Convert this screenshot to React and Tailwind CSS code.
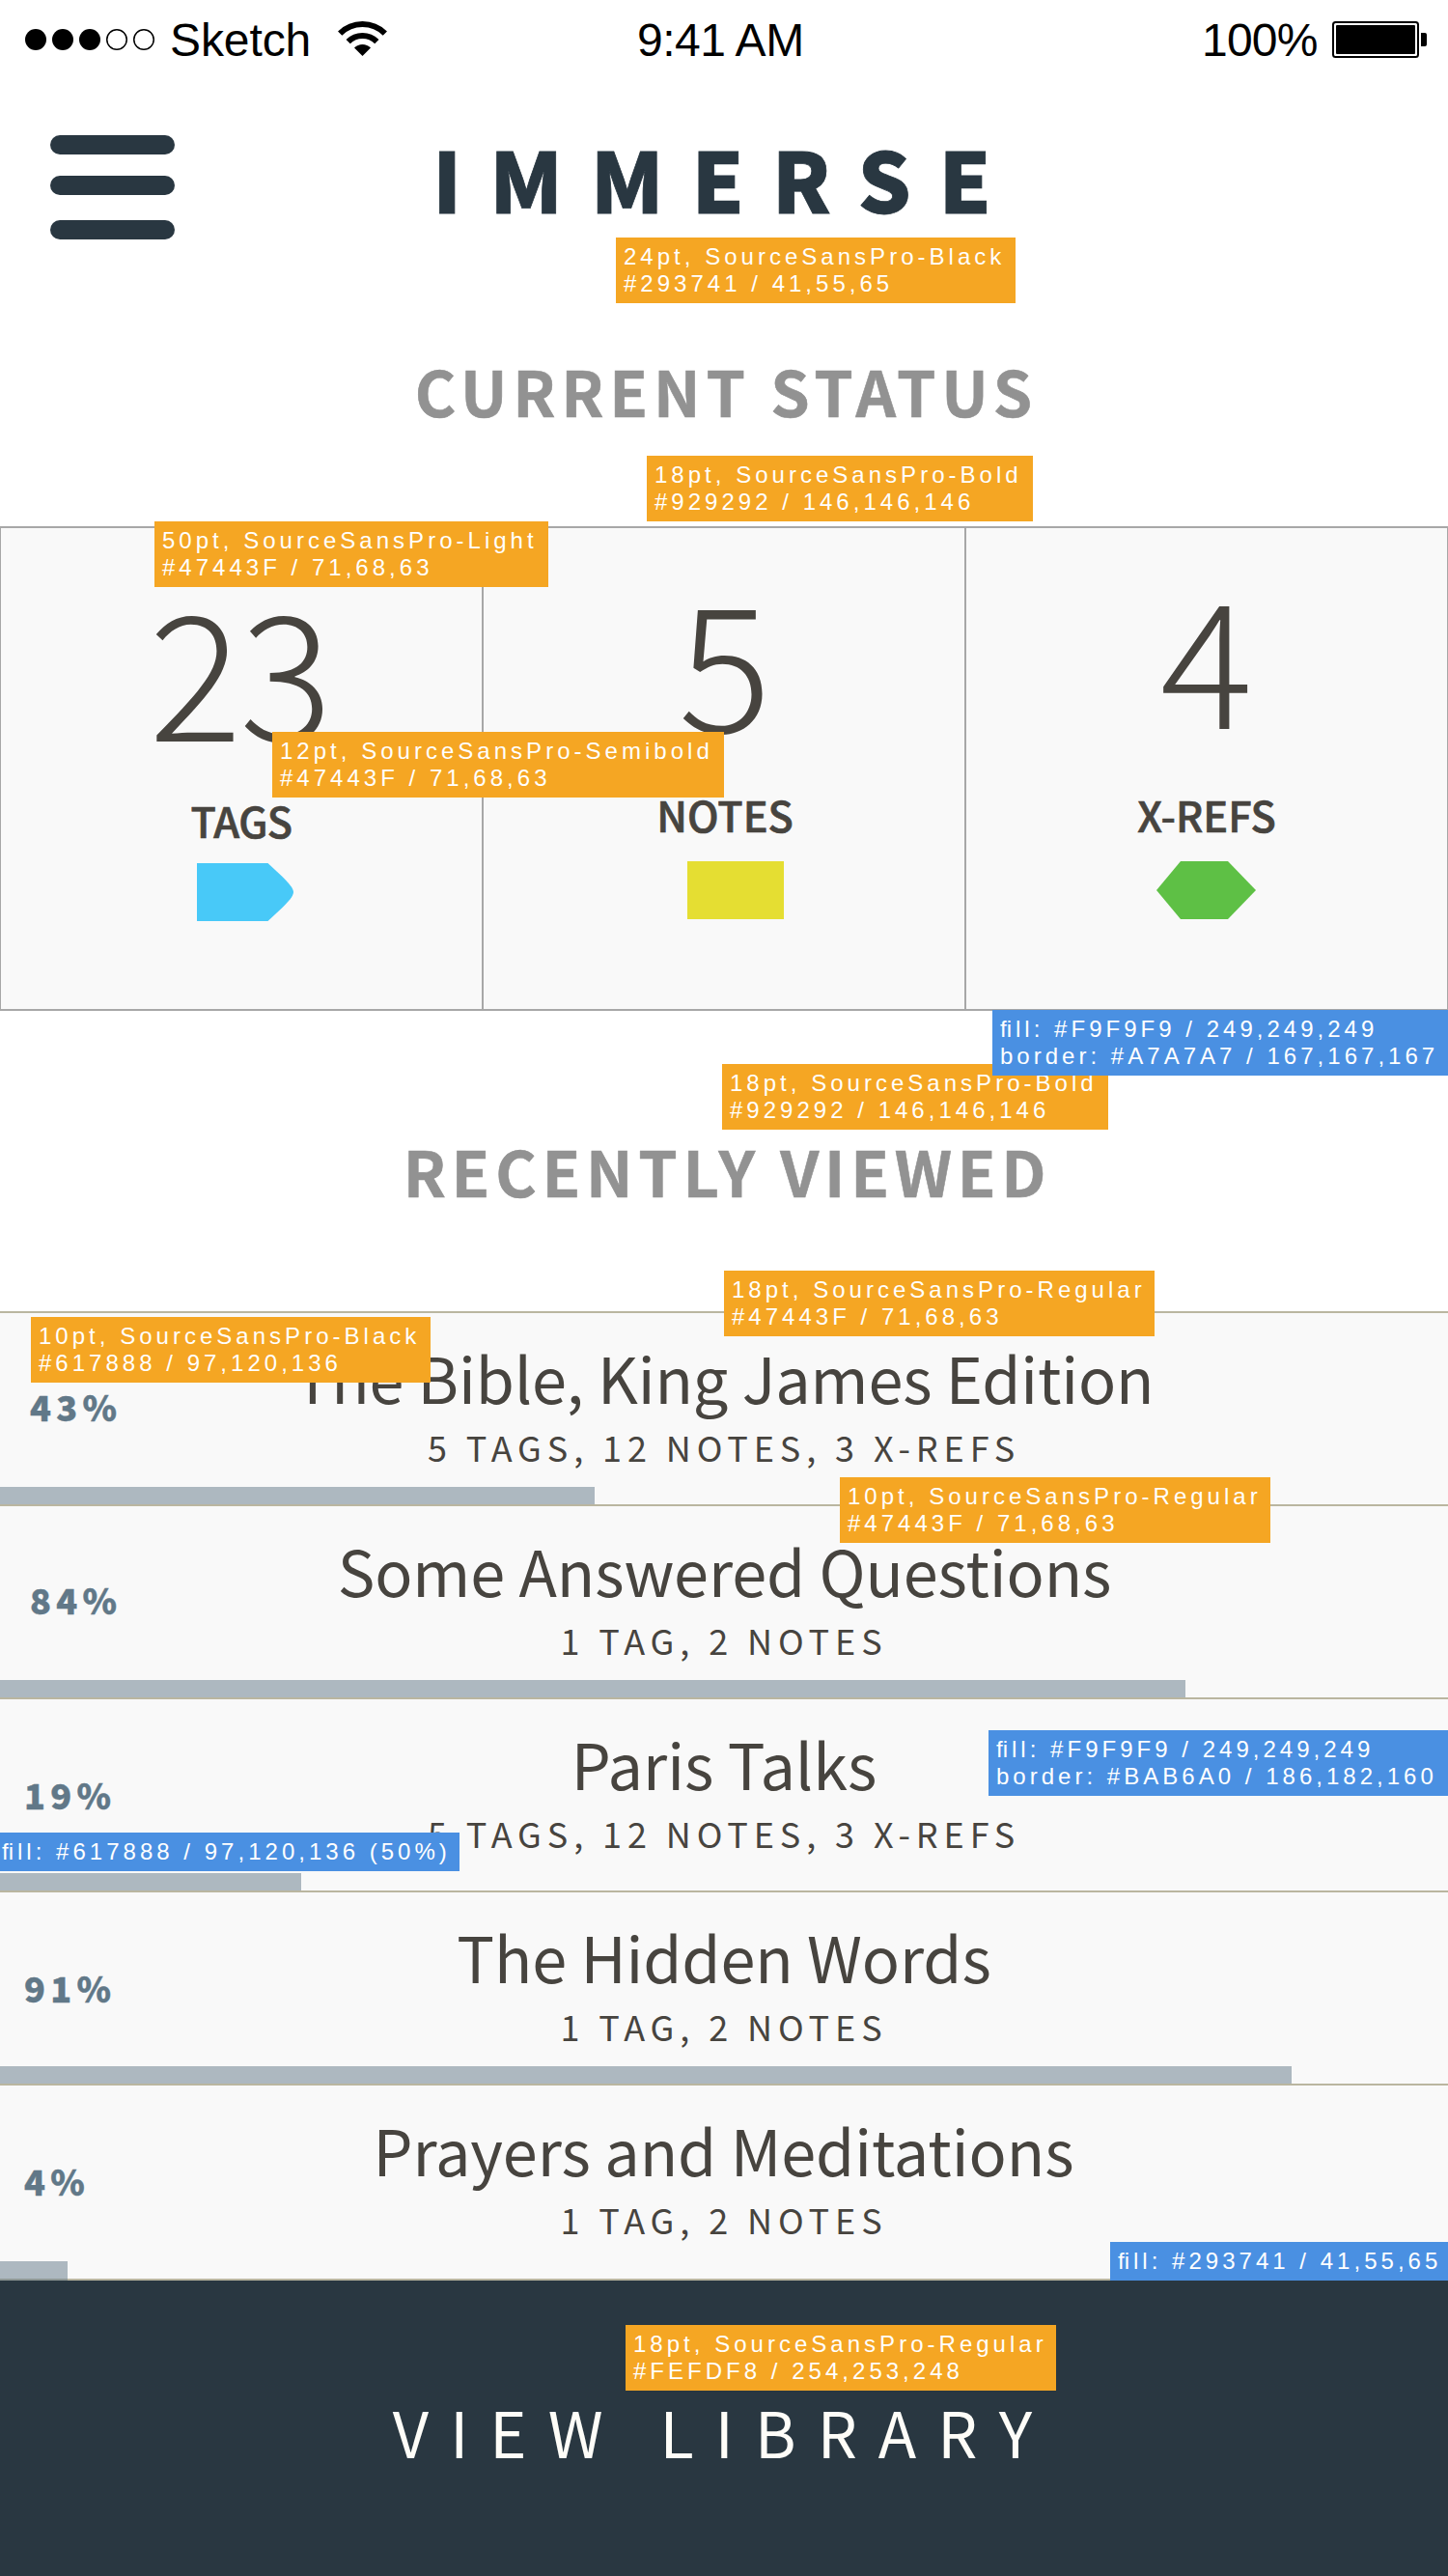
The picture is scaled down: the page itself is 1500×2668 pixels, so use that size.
import React from "react";
import clsx from "clsx";

const SOURCE = "font-['Noto_Sans_CJK_SC',sans-serif]";

/* ---------- status bar ---------- */

function SignalDots() {
  return (
    <svg width="135" height="22" viewBox="0 0 135 22" className="shrink-0">
      {[11, 39, 67].map((x) => (
        <circle key={x} cx={x} cy="11" r="11" fill="#000" />
      ))}
      {[95, 123].map((x) => (
        <circle key={x} cx={x} cy="11" r="10.25" fill="none" stroke="#000" strokeWidth="1.5" />
      ))}
    </svg>
  );
}

function Wifi() {
  return (
    <svg width="51" height="36" viewBox="0 0 51 36" className="-mt-0.5 ml-7 shrink-0">
      <g fill="none" stroke="#000" strokeWidth="6">
        <path d="M2.17 12.67A33 33 0 0 1 48.83 12.67" />
        <path d="M10.65 21.15A21 21 0 0 1 40.35 21.15" />
      </g>
      <path d="M25.5 36L17.01 27.51A12 12 0 0 1 33.99 27.51Z" fill="#000" />
    </svg>
  );
}

function Battery() {
  return (
    <svg width="98" height="38" viewBox="0 0 98 38" className="shrink-0">
      <rect x="1" y="1" width="88" height="36" rx="2.5" fill="none" stroke="#000" strokeWidth="2" />
      <rect x="4" y="4" width="82" height="30" rx="1" fill="#000" />
      <path d="M92 12h4a2 2 0 0 1 2 2v10a2 2 0 0 1-2 2h-4z" fill="#000" />
    </svg>
  );
}

function StatusBar() {
  return (
    <div className="flex h-[82px] items-center font-['Liberation_Sans',sans-serif] text-[48px] leading-[82px] text-black">
      <div className="flex w-[660px] shrink-0 items-center pl-[26px]">
        <SignalDots />
        <span className="ml-[15px] pt-px tracking-[-0.1px]">Sketch</span>
        <Wifi />
      </div>
      <span className="w-[585px] shrink-0 pt-px tracking-[-0.5px]">9:41 AM</span>
      <span className="w-[135px] shrink-0 pt-px tracking-[-0.76px]">100%</span>
      <Battery />
    </div>
  );
}

/* ---------- header ---------- */

function Header() {
  return (
    <header className="mt-[58px] flex h-[108px] pl-[52px]">
      <button className="flex w-[129px] flex-col" aria-label="Menu">
        <span className="h-5 rounded-[10px] bg-[#293741]" />
        <span className="mt-[22px] h-5 rounded-[10px] bg-[#293741]" />
        <span className="mt-[26px] h-5 rounded-[10px] bg-[#293741]" />
      </button>
      <h1 className="mt-px ml-[267px] text-[86.4px] leading-[85px] font-black tracking-[28.89px] text-[#293741] [-webkit-text-stroke:0.8px_#293741]">
        IMMERSE
      </h1>
    </header>
  );
}

/* ---------- stats ---------- */

function Stat({ value, label, icon, column, number, caption }) {
  return (
    <div className={clsx("flex flex-col items-center border-x border-[#a7a7a7]", column)}>
      <div className={clsx("text-[180px] leading-[180px] font-light", number)}>{value}</div>
      <div
        className={clsx(
          "text-[43.2px] leading-[60px] font-medium [-webkit-text-stroke:0.7px_#47443f]",
          caption
        )}
      >
        {label}
      </div>
      {icon}
    </div>
  );
}

function Stats() {
  return (
    <section className="mt-[91px] grid h-[502px] grid-cols-3 border-y-2 border-[#a7a7a7] bg-[#f9f9f9] text-[#47443f]">
      <Stat
        value="23"
        label="TAGS"
        column="pt-[53px]"
        number="pr-1 tracking-[-2.5px]"
        caption="mt-[39px] tracking-[-0.6px]"
        icon={
          <svg width="100" height="60" viewBox="0 0 100 60" className="mt-[15px] ml-2">
            <path d="M0 0H73.5L88 13.5C95 20.500 100 26 100 30C100 34 95 39.500 88 46.500L73.500 60H0Z" fill="#48c9f8" />
          </svg>
        }
      />
      <Stat
        value="5"
        label="NOTES"
        column="pt-[44px]"
        number="pl-0.5"
        caption="mt-[42px] pl-[2px]"
        icon={<div className="mt-[19px] ml-6 h-[60px] w-[100px] bg-[#e5de32]" />}
      />
      <Stat
        value="4"
        label="X-REFS"
        column="pt-10"
        number=""
        caption="mt-[46px]"
        icon={
          <svg width="103" height="60" viewBox="0 0 103 60" className="mt-[19px] mr-px">
            <path d="M25 0H74L103 30L74 60H25L0 30Z" fill="#5ec045" />
          </svg>
        }
      />
    </section>
  );
}

/* ---------- book list ---------- */

const BOOKS = [
  { title: "The Bible, King James Edition", meta: "5 TAGS, 12 NOTES, 3 X-REFS", pct: "43%", bar: "w-[616px]", at: "pt-[76px] pl-[31px]", shift: "tracking-[-0.12px]" },
  { title: "Some Answered Questions", meta: "1 TAG, 2 NOTES", pct: "84%", bar: "w-[1228px]", at: "pt-[76px] pl-[31px]", shift: "pl-px tracking-[-0.09px]" },
  { title: "Paris Talks", meta: "5 TAGS, 12 NOTES, 3 X-REFS", pct: "19%", bar: "w-[312px]", at: "pt-[78px] pl-[25px]", shift: "" },
  { title: "The Hidden Words", meta: "1 TAG, 2 NOTES", pct: "91%", bar: "w-[1338px]", at: "pt-[78px] pl-[25px]", shift: "tracking-[-0.1px]" },
  { title: "Prayers and Meditations", meta: "1 TAG, 2 NOTES", pct: "4%", bar: "w-[70px]", at: "pt-[78px] pl-[25px]", shift: "pr-px tracking-[-0.05px]" },
];

function Book({ book, last }) {
  return (
    <li
      className={clsx(
        "flex flex-col justify-between border-[#bab6a0] bg-[#f9f9f9]",
        last ? "h-[204px] border-y-2" : "h-[200px] border-t-2"
      )}
    >
      <div className="grid text-[#47443f]">
        <div
          className={clsx(
            "col-start-1 row-start-1 justify-self-start text-[36px] leading-10 font-black tracking-[5.3px] text-[#617888] [-webkit-text-stroke:0.4px_#617888]",
            book.at
          )}
        >
          {book.pct}
        </div>
        <div className="col-start-1 row-start-1 pt-[26px] text-center">
          <h3 className={clsx("text-[64.8px] leading-[80px]", book.shift)}>{book.title}</h3>
          <p className="mt-3 text-[36px] leading-10 tracking-[5.9px]">{book.meta}</p>
        </div>
      </div>
      <div className={clsx("shrink-0 bg-[#617888]/50", book.bar, last ? "-mb-0.5 h-5" : "h-[18px]")} />
    </li>
  );
}

/* ---------- design notes ---------- */

const NOTES = [
  { box: "top-[246px] left-[638px] w-[414px]", lines: ["24pt, SourceSansPro-Black", "#293741 / 41,55,65"] },
  { box: "top-[472px] left-[670px] w-[400px]", lines: ["18pt, SourceSansPro-Bold", "#929292 / 146,146,146"] },
  { box: "top-[540px] left-[160px] w-[408px]", lines: ["50pt, SourceSansPro-Light", "#47443F / 71,68,63"] },
  { box: "top-[758px] left-[282px] w-[468px]", lines: ["12pt, SourceSansPro-Semibold", "#47443F / 71,68,63"] },
  { box: "top-[1102px] left-[748px] w-[400px]", lines: ["18pt, SourceSansPro-Bold", "#929292 / 146,146,146"] },
  { box: "top-[1046px] left-[1028px] w-[472px]", blue: true, lines: ["fill: #F9F9F9 / 249,249,249", "border: #A7A7A7 / 167,167,167"] },
  { box: "top-[1316px] left-[750px] w-[446px]", lines: ["18pt, SourceSansPro-Regular", "#47443F / 71,68,63"] },
  { box: "top-[1364px] left-[32px] w-[414px]", lines: ["10pt, SourceSansPro-Black", "#617888 / 97,120,136"] },
  { box: "top-[1530px] left-[870px] w-[446px]", lines: ["10pt, SourceSansPro-Regular", "#47443F / 71,68,63"] },
  { box: "top-[1792px] left-[1024px] w-[476px]", blue: true, lines: ["fill: #F9F9F9 / 249,249,249", "border: #BAB6A0 / 186,182,160"] },
  { box: "top-[1898px] left-[-6px] w-[482px]", blue: true, lines: ["fill: #617888 / 97,120,136 (50%)"] },
  { box: "top-[2322px] left-[1150px] w-[350px]", blue: true, lines: ["fill: #293741 / 41,55,65"] },
  { box: "top-[2408px] left-[648px] w-[446px]", lines: ["18pt, SourceSansPro-Regular", "#FEFDF8 / 254,253,248"] },
];

function NoteLine({ text }) {
  if (!text.startsWith("fi")) return <div>{text}</div>;
  return (
    <div>
      <span className="mr-1 tracking-normal">fi</span>
      {text.slice(2)}
    </div>
  );
}

function Note({ note }) {
  return (
    <div
      className={clsx(
        "absolute px-2 py-1.5 font-['Liberation_Sans',sans-serif] text-[24px] leading-7 tracking-[4.02px] whitespace-nowrap text-white",
        note.blue ? "bg-[#4a90e2]" : "bg-[#f5a623]",
        note.box
      )}
    >
      {note.lines.map((line) => (
        <NoteLine key={line} text={line} />
      ))}
    </div>
  );
}

export default function App() {
  return (
    <div className={clsx("relative flex h-[2668px] w-[1500px] flex-col overflow-hidden bg-white", SOURCE)}>
      <StatusBar />
      <Header />
      <h2 className="mt-[106px] pl-[5px] text-center text-[64.8px] leading-[100px] font-bold tracking-[5.85px] text-[#929292] [-webkit-text-stroke:0.6px_#929292]">
        CURRENT STATUS
      </h2>
      <Stats />
      <h2 className="mt-[115px] pl-[7px] text-center text-[64.8px] leading-[100px] font-bold tracking-[5.72px] text-[#929292] [-webkit-text-stroke:0.6px_#929292]">
        RECENTLY VIEWED
      </h2>
      <ul className="mt-24">
        {BOOKS.map((book, i) => (
          <Book key={book.title} book={book} last={i === BOOKS.length - 1} />
        ))}
      </ul>
      <footer className="h-[306px] bg-[#293741] pt-[106px] pr-0.5 text-center text-[64.8px] leading-[100px] tracking-[22.18px] text-[#fefdf8]">
        VIEW LIBRARY
      </footer>
      {NOTES.map((note) => (
        <Note key={note.box} note={note} />
      ))}
    </div>
  );
}
